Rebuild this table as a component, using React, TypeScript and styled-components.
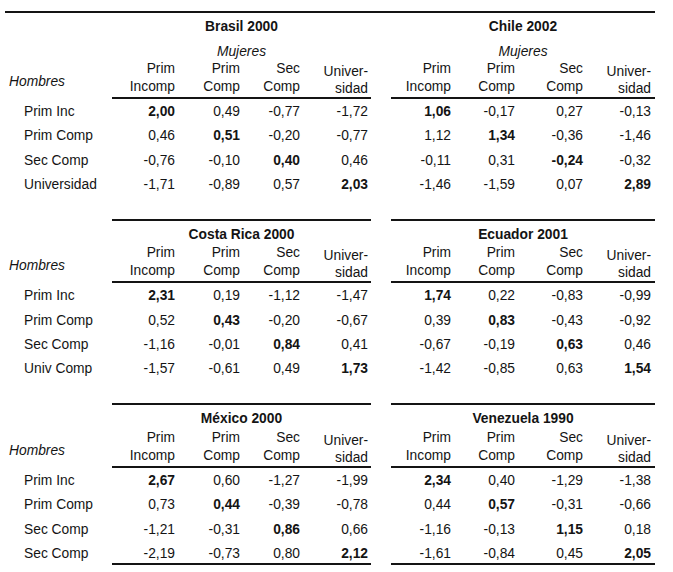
import React from "react";
import styled, { createGlobalStyle, css } from "styled-components";

const GlobalStyle = createGlobalStyle`
  html, body { margin: 0; padding: 0; background: #ffffff; }
  body {
    font-family: "Liberation Sans", Arial, Helvetica, sans-serif;
    font-size: 13.8px;
    color: #141414;
  }
`;

const gridCols = css`
  display: grid;
  grid-template-columns: 107px 63px 65px 60px 71px 20px 60px 64px 68px 72px;
`;

const Page = styled.div`
  width: 650px;
  padding: 11px 0 0 5px;
`;

const Section = styled.section<{ $top: number }>`
  margin-top: ${(p) => p.$top}px;
`;

const RuleRow = styled.div`
  ${gridCols};
  height: 2px;
`;

const Rule = styled.div<{ $span: string }>`
  grid-column: ${(p) => p.$span};
  background: #141414;
  height: 2px;
`;

const TitleRow = styled.div<{ $gap: number }>`
  ${gridCols};
  padding-top: 5px;
  padding-bottom: ${(p) => p.$gap}px;
`;

const Title = styled.div<{ $span: string }>`
  grid-column: ${(p) => p.$span};
  text-align: center;
  font-weight: bold;
  line-height: 18px;
`;

const SubRow = styled.div`
  ${gridCols};
  margin-top: 7px;
`;

const SubTitle = styled.div<{ $span: string }>`
  grid-column: ${(p) => p.$span};
  text-align: center;
  font-style: italic;
  line-height: 17px;
`;

const HeadRow = styled.div`
  ${gridCols};
`;

const Hombres = styled.div`
  grid-column: 1;
  align-self: center;
  padding: 5px 0 0 4px;
  font-style: italic;
  line-height: 18px;
`;

const HeadCell = styled.div<{ $wide?: boolean; $pad?: number }>`
  text-align: right;
  border-bottom: 2px solid #141414;
  line-height: ${(p) => (p.$wide ? "17px" : "18px")};
  padding: ${(p) => (p.$wide ? "3px" : "0")} ${(p) => p.$pad ?? 0}px
    ${(p) => (p.$wide ? "0" : "1px")} 0;
`;

const Spacer = styled.div``;

const Body = styled.div`
  ${gridCols};
  row-gap: 6.4px;
  padding-top: 4px;
  line-height: 18px;
`;

const RowLabel = styled.div`
  padding-left: 19px;
  white-space: nowrap;
`;

const Num = styled.div<{ $bold: boolean; $pad?: number }>`
  text-align: right;
  font-weight: ${(p) => (p.$bold ? "bold" : "normal")};
  padding-right: ${(p) => p.$pad ?? 0}px;
`;

type Block = { title: string; rows: string[][] };
type Table = { left: Block; right: Block; labels: string[] };

const tables: Table[] = [
  {
    labels: ["Prim Inc", "Prim Comp", "Sec Comp", "Universidad"],
    left: {
      title: "Brasil 2000",
      rows: [
        ["2,00", "0,49", "-0,77", "-1,72"],
        ["0,46", "0,51", "-0,20", "-0,77"],
        ["-0,76", "-0,10", "0,40", "0,46"],
        ["-1,71", "-0,89", "0,57", "2,03"],
      ],
    },
    right: {
      title: "Chile 2002",
      rows: [
        ["1,06", "-0,17", "0,27", "-0,13"],
        ["1,12", "1,34", "-0,36", "-1,46"],
        ["-0,11", "0,31", "-0,24", "-0,32"],
        ["-1,46", "-1,59", "0,07", "2,89"],
      ],
    },
  },
  {
    labels: ["Prim Inc", "Prim Comp", "Sec Comp", "Univ Comp"],
    left: {
      title: "Costa Rica 2000",
      rows: [
        ["2,31", "0,19", "-1,12", "-1,47"],
        ["0,52", "0,43", "-0,20", "-0,67"],
        ["-1,16", "-0,01", "0,84", "0,41"],
        ["-1,57", "-0,61", "0,49", "1,73"],
      ],
    },
    right: {
      title: "Ecuador 2001",
      rows: [
        ["1,74", "0,22", "-0,83", "-0,99"],
        ["0,39", "0,83", "-0,43", "-0,92"],
        ["-0,67", "-0,19", "0,63", "0,46"],
        ["-1,42", "-0,85", "0,63", "1,54"],
      ],
    },
  },
  {
    labels: ["Prim Inc", "Prim Comp", "Sec Comp", "Sec Comp"],
    left: {
      title: "México 2000",
      rows: [
        ["2,67", "0,60", "-1,27", "-1,99"],
        ["0,73", "0,44", "-0,39", "-0,78"],
        ["-1,21", "-0,31", "0,86", "0,66"],
        ["-2,19", "-0,73", "0,80", "2,12"],
      ],
    },
    right: {
      title: "Venezuela 1990",
      rows: [
        ["2,34", "0,40", "-1,29", "-1,38"],
        ["0,44", "0,57", "-0,31", "-0,66"],
        ["-1,16", "-0,13", "1,15", "0,18"],
        ["-1,61", "-0,84", "0,45", "2,05"],
      ],
    },
  },
];

const LEFT = "2 / 6";
const RIGHT = "7 / 11";

const Heads: React.FC<{ lastPad: number }> = ({ lastPad }) => (
  <>
    <HeadCell>
      Prim
      <br />
      Incomp
    </HeadCell>
    <HeadCell>
      Prim
      <br />
      Comp
    </HeadCell>
    <HeadCell>
      Sec
      <br />
      Comp
    </HeadCell>
    <HeadCell $wide $pad={lastPad}>
      Univer-
      <br />
      sidad
    </HeadCell>
  </>
);

const TableSection: React.FC<{
  t: Table;
  index: number;
}> = ({ t, index }) => {
  const first = index === 0;
  const last = index === tables.length - 1;
  const top = index === 0 ? 0 : index === 1 ? 25 : 24.5;
  return (
    <Section $top={top}>
      <RuleRow>
        {first ? (
          <Rule $span="1 / -1" />
        ) : (
          <>
            <Rule $span={LEFT} />
            <Rule $span={RIGHT} />
          </>
        )}
      </RuleRow>
      <TitleRow $gap={last ? 1 : 0}>
        <Title $span={LEFT}>{t.left.title}</Title>
        <Title $span={RIGHT}>{t.right.title}</Title>
      </TitleRow>
      {first && (
        <SubRow>
          <SubTitle $span={LEFT}>Mujeres</SubTitle>
          <SubTitle $span={RIGHT}>Mujeres</SubTitle>
        </SubRow>
      )}
      <HeadRow>
        <Hombres>Hombres</Hombres>
        <Heads lastPad={3} />
        <Spacer />
        <Heads lastPad={4} />
      </HeadRow>
      <Body>
        {t.labels.map((label, r) => (
          <React.Fragment key={r}>
            <RowLabel>{label}</RowLabel>
            {t.left.rows[r].map((v, c) => (
              <Num key={"l" + c} $bold={c === r} $pad={c === 3 ? 3 : 0}>
                {v}
              </Num>
            ))}
            <Spacer />
            {t.right.rows[r].map((v, c) => (
              <Num key={"r" + c} $bold={c === r} $pad={c === 3 ? 4 : 0}>
                {v}
              </Num>
            ))}
          </React.Fragment>
        ))}
      </Body>
      {last && (
        <RuleRow>
          <Rule $span={LEFT} />
          <Rule $span={RIGHT} />
        </RuleRow>
      )}
    </Section>
  );
};

export default function App() {
  return (
    <>
      <GlobalStyle />
      <Page>
        {tables.map((t, i) => (
          <TableSection key={i} t={t} index={i} />
        ))}
      </Page>
    </>
  );
}
